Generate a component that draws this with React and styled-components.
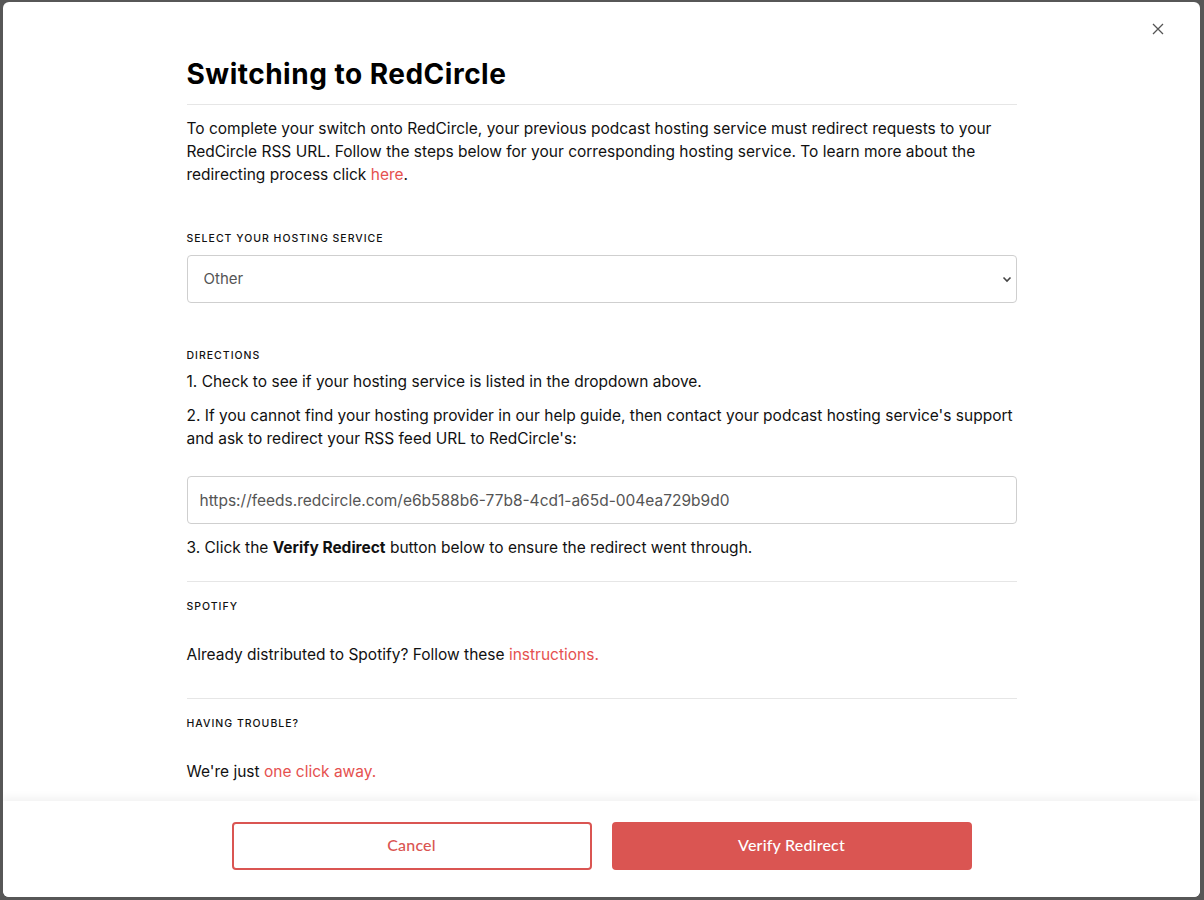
import React, { useState } from "react";
import styled, { createGlobalStyle } from "styled-components";

const RED = "#da5552";
const LINK = "#e5514f";
const FEED_URL = "https://feeds.redcircle.com/e6b588b6-77b8-4cd1-a65d-004ea729b9d0";

const GlobalStyle = createGlobalStyle`
  html, body {
    margin: 0;
    padding: 0;
    height: 100%;
    background: #575757;
  }
  body {
    font-family: "Inter", "Liberation Sans", sans-serif;
    color: #111;
  }
  * { box-sizing: border-box; }
`;

const Backdrop = styled.div`
  height: 900px;
  padding: 2px 4px 3px 3px;
  display: flex;
`;

const Modal = styled.div`
  position: relative;
  flex: 1;
  display: flex;
  flex-direction: column;
  background: #fff;
  border-radius: 6px;
  overflow: hidden;
`;

const CloseButton = styled.button`
  position: absolute;
  top: 17px;
  right: 32px;
  width: 20px;
  height: 20px;
  padding: 0;
  border: none;
  background: none;
  display: flex;
  align-items: center;
  justify-content: center;
  cursor: pointer;
`;

const Body = styled.div`
  flex: 1;
  overflow: hidden;
  padding: 52px 0 0;
`;

const Column = styled.div`
  width: 830px;
  margin: 0 auto;
`;

const Title = styled.h1`
  margin: 0;
  font-family: "Inter", "Liberation Sans", sans-serif;
  font-weight: 700;
  font-size: 28px;
  line-height: 40px;
  letter-spacing: 0.5px;
  color: #000;
  padding-bottom: 10px;
  border-bottom: 1px solid #e6e6e6;
`;

const Text = styled.p`
  margin: ${(p) => p.$margin || "0"};
  font-size: 15.5px;
  line-height: 23px;
  letter-spacing: 0;
  color: #111;
`;

const Link = styled.a`
  color: ${LINK};
  text-decoration: none;
  cursor: pointer;
`;

const Label = styled.div`
  margin: ${(p) => p.$margin || "0"};
  font-size: 10.5px;
  line-height: 14px;
  font-weight: 500;
  letter-spacing: 1px;
  text-transform: uppercase;
  color: #111;
`;

const SelectWrap = styled.div`
  position: relative;
  margin-top: 9px;
`;

const Select = styled.select`
  appearance: none;
  width: 100%;
  height: 48px;
  padding: 0 16px 1px;
  border: 1px solid #cfcfcf;
  border-radius: 4px;
  background: #fff;
  font-family: inherit;
  font-size: 15px;
  color: #555;
  outline: none;
`;

const Chevron = styled.svg`
  position: absolute;
  right: 5px;
  top: 20px;
  pointer-events: none;
`;

const Field = styled.input`
  display: block;
  width: 100%;
  height: 48px;
  margin: 26px 0 12px;
  padding: 0 12px;
  border: 1px solid #cfcfcf;
  border-radius: 4px;
  font-family: inherit;
  font-size: 15.5px;
  color: #555;
  outline: none;
`;

const Section = styled.div`
  border-top: 1px solid #e6e6e6;
  margin-top: ${(p) => p.$top || "0"};
  padding-top: 18px;
`;

const Footer = styled.div`
  flex: 0 0 96px;
  display: flex;
  justify-content: center;
  align-items: flex-start;
  gap: 20px;
  padding-top: 21px;
  background: #fff;
  box-shadow: 0 -4px 8px rgba(0, 0, 0, 0.05);
  position: relative;
`;

const Button = styled.button`
  width: 360px;
  height: 48px;
  padding: 0 0 4px;
  border-radius: 4px;
  border: 2px solid ${RED};
  background: ${(p) => (p.$primary ? RED : "#fff")};
  color: ${(p) => (p.$primary ? "#fff" : RED)};
  font-family: "Lato", "Liberation Sans", sans-serif;
  font-size: 16px;
  font-weight: 500;
  letter-spacing: 0.2px;
  cursor: pointer;
`;

export default function App() {
  const [service, setService] = useState("other");

  return (
    <>
      <GlobalStyle />
      <Backdrop>
        <Modal>
          <CloseButton aria-label="Close">
            <svg width="12" height="12" viewBox="0 0 12 12">
              <path d="M1 1L11 11M11 1L1 11" stroke="#555" strokeWidth="1.3" fill="none" />
            </svg>
          </CloseButton>
          <Body>
            <Column>
              <Title>Switching to RedCircle</Title>
              <Text $margin="12px 0 0">
                To complete your switch onto RedCircle, your previous podcast hosting service must redirect requests to your
                RedCircle RSS URL. Follow the steps below for your corresponding hosting service. To learn more about the
                redirecting process click <Link>here</Link>.
              </Text>

              <Label $margin="46px 0 0">Select your hosting service</Label>
              <SelectWrap>
                <Select value={service} onChange={(e) => setService(e.target.value)}>
                  <option value="anchor">Anchor</option>
                  <option value="libsyn">Libsyn</option>
                  <option value="podbean">Podbean</option>
                  <option value="other">Other</option>
                </Select>
                <Chevron width="10" height="8" viewBox="0 0 10 8">
                  <path d="M1.5 2.5L5 6L8.5 2.5" stroke="#444" strokeWidth="1.6" fill="none" />
                </Chevron>
              </SelectWrap>

              <Label $margin="46px 0 0">Directions</Label>
              <Text $margin="7px 0 0">1. Check to see if your hosting service is listed in the dropdown above.</Text>
              <Text $margin="11px 0 0">
                2. If you cannot find your hosting provider in our help guide, then contact your podcast hosting service's support
                and ask to redirect your RSS feed URL to RedCircle's:
              </Text>
              <Field readOnly value={FEED_URL} />
              <Text>
                3. Click the <b>Verify Redirect</b> button below to ensure the redirect went through.
              </Text>

              <Section $top="22px">
                <Label>Spotify</Label>
                <Text $margin="29px 0 0">
                  Already distributed to Spotify? Follow these <Link>instructions.</Link>
                </Text>
              </Section>

              <Section $top="32px">
                <Label>Having trouble?</Label>
                <Text $margin="29px 0 0">
                  We're just <Link>one click away.</Link>
                </Text>
              </Section>
            </Column>
          </Body>
          <Footer>
            <Button>Cancel</Button>
            <Button $primary>Verify Redirect</Button>
          </Footer>
        </Modal>
      </Backdrop>
    </>
  );
}
